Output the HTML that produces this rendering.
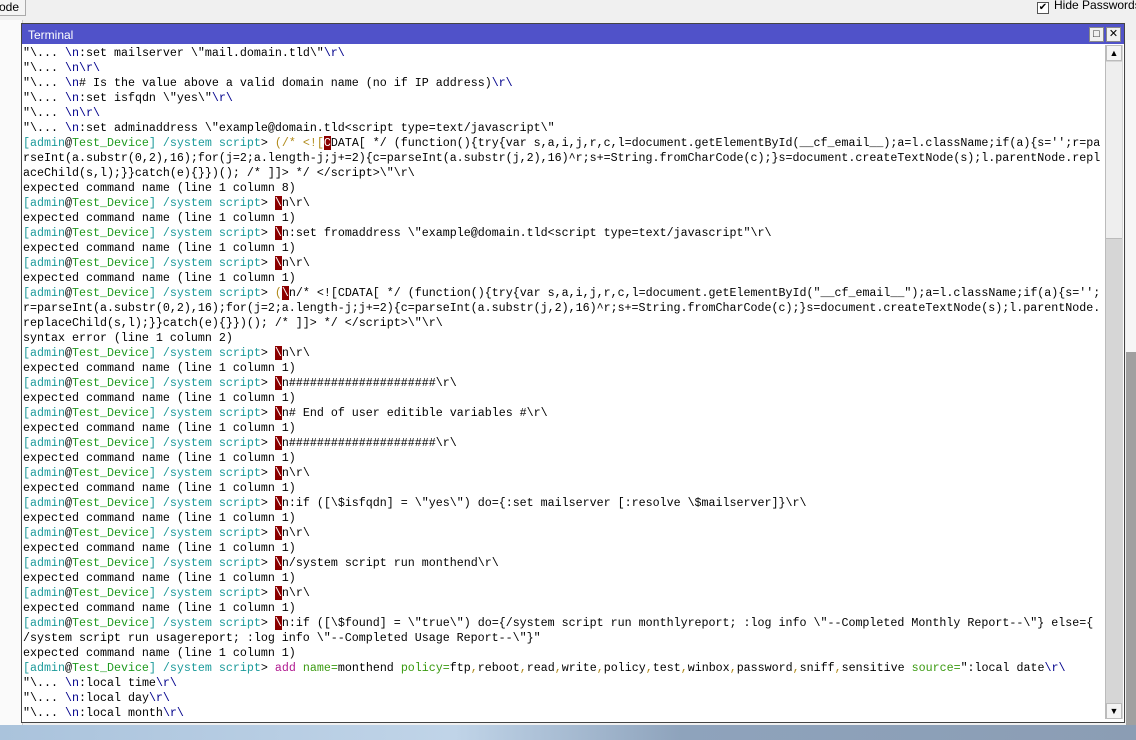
<!DOCTYPE html>
<html><head><meta charset="utf-8"><style>
body{margin:0;width:1136px;height:740px;background:#f0f0f0;position:relative;overflow:hidden;font-family:"Liberation Sans",sans-serif}
.topbtn{position:absolute;left:-2px;top:-2px;width:26px;height:16px;border:1px solid #aaa;background:#f4f4f4;font-size:12px;line-height:16px}
.hp{position:absolute;left:1037px;top:-2px;font-size:12px;color:#000;white-space:nowrap}
.hp b{display:inline-block;width:10px;height:10px;border:1px solid #555;background:#fff;vertical-align:-1px;margin-right:5px;font-size:10px;line-height:10px;text-align:center;font-weight:normal}
.leftlist{position:absolute;left:0;top:20px;width:22px;height:705px;background:#fafafa;border-right:1px solid #ccc}
.rightpane{position:absolute;left:1126px;top:40px;width:10px;height:690px;background:#f6f6f6}
.rightdark{position:absolute;left:1126px;top:352px;width:10px;height:375px;background:#a0a0a0}
.win{position:absolute;left:21px;top:23px;width:1102px;height:698px;background:#fff;border:1px solid #444}
.title{height:20px;background:#5052c9;color:#fff;font-size:12px;line-height:22px;padding-left:6px;position:relative}
.tb{position:absolute;top:3px;width:13px;height:13px;background:#f0f0f0;border:1px solid #888;color:#000;font-size:11px;line-height:13px;text-align:center}
.term{position:absolute;left:1px;top:22px;font-family:"Liberation Mono",monospace;font-size:11.67px;line-height:15px;white-space:pre;color:#000}
.sb{position:absolute;left:1083px;top:21px;width:17px;height:674px;background:#d6d6d6;border-left:1px solid #bbb}
.thumb{position:absolute;left:0;top:17px;width:16px;height:176px;background:#eee;border-bottom:1px solid #bbb}
.arr{position:absolute;left:0;width:16px;height:16px;background:#f4f4f4;border:1px solid #bbb;box-sizing:border-box;font-size:9px;line-height:14px;text-align:center}
.task{position:absolute;left:0;top:725px;width:1136px;height:15px;background:linear-gradient(90deg,#aac3dc,#c0d4e8 40%,#8ea3bc 60%,#8b9db4)}
.c{color:#1b9a9a}.g{color:#1f9a1f}.n{color:#00008b}.r{background:#8b0000;color:#fff}.m{color:#b0178f}.o{color:#b08a1a}.gg{color:#3a9a10}
</style></head><body>
<div class="topbtn">ode</div>
<div class="hp"><b>✔</b>Hide Passwords</div>
<div class="leftlist"></div>
<div class="rightpane"></div>
<div class="rightdark"></div>
<div class="win">
<div class="title">Terminal<span class="tb" style="left:1067px">□</span><span class="tb" style="left:1084px">✕</span></div>
<div class="term">"\... <span class="n">\n</span>:set mailserver \"mail.domain.tld\"<span class="n">\r\</span>
"\... <span class="n">\n\r\</span>
"\... <span class="n">\n</span># Is the value above a valid domain name (no if IP address)<span class="n">\r\</span>
"\... <span class="n">\n</span>:set isfqdn \"yes\"<span class="n">\r\</span>
"\... <span class="n">\n\r\</span>
"\... <span class="n">\n</span>:set adminaddress \"example@domain.tld&lt;script type=text/javascript\"
<span class="c">[admin</span>@<span class="g">Test_Device</span><span class="c">] /system script</span>&gt; <span class="o">(/* &lt;![</span><span class="r">C</span>DATA[ */ (function(){try{var s,a,i,j,r,c,l=document.getElementById(__cf_email__);a=l.className;if(a){s='';r=pa
rseInt(a.substr(0,2),16);for(j=2;a.length-j;j+=2){c=parseInt(a.substr(j,2),16)^r;s+=String.fromCharCode(c);}s=document.createTextNode(s);l.parentNode.repl
aceChild(s,l);}}catch(e){}})(); /* ]]&gt; */ &lt;/script&gt;\"\r\
expected command name (line 1 column 8)
<span class="c">[admin</span>@<span class="g">Test_Device</span><span class="c">] /system script</span>&gt; <span class="r">\</span>n\r\
expected command name (line 1 column 1)
<span class="c">[admin</span>@<span class="g">Test_Device</span><span class="c">] /system script</span>&gt; <span class="r">\</span>n:set fromaddress \"example@domain.tld&lt;script type=text/javascript"\r\
expected command name (line 1 column 1)
<span class="c">[admin</span>@<span class="g">Test_Device</span><span class="c">] /system script</span>&gt; <span class="r">\</span>n\r\
expected command name (line 1 column 1)
<span class="c">[admin</span>@<span class="g">Test_Device</span><span class="c">] /system script</span>&gt; <span class="o">(</span><span class="r">\</span>n/* &lt;![CDATA[ */ (function(){try{var s,a,i,j,r,c,l=document.getElementById("__cf_email__");a=l.className;if(a){s='';
r=parseInt(a.substr(0,2),16);for(j=2;a.length-j;j+=2){c=parseInt(a.substr(j,2),16)^r;s+=String.fromCharCode(c);}s=document.createTextNode(s);l.parentNode.
replaceChild(s,l);}}catch(e){}})(); /* ]]&gt; */ &lt;/script&gt;\"\r\
syntax error (line 1 column 2)
<span class="c">[admin</span>@<span class="g">Test_Device</span><span class="c">] /system script</span>&gt; <span class="r">\</span>n\r\
expected command name (line 1 column 1)
<span class="c">[admin</span>@<span class="g">Test_Device</span><span class="c">] /system script</span>&gt; <span class="r">\</span>n#####################\r\
expected command name (line 1 column 1)
<span class="c">[admin</span>@<span class="g">Test_Device</span><span class="c">] /system script</span>&gt; <span class="r">\</span>n# End of user editible variables #\r\
expected command name (line 1 column 1)
<span class="c">[admin</span>@<span class="g">Test_Device</span><span class="c">] /system script</span>&gt; <span class="r">\</span>n#####################\r\
expected command name (line 1 column 1)
<span class="c">[admin</span>@<span class="g">Test_Device</span><span class="c">] /system script</span>&gt; <span class="r">\</span>n\r\
expected command name (line 1 column 1)
<span class="c">[admin</span>@<span class="g">Test_Device</span><span class="c">] /system script</span>&gt; <span class="r">\</span>n:if ([\$isfqdn] = \"yes\") do={:set mailserver [:resolve \$mailserver]}\r\
expected command name (line 1 column 1)
<span class="c">[admin</span>@<span class="g">Test_Device</span><span class="c">] /system script</span>&gt; <span class="r">\</span>n\r\
expected command name (line 1 column 1)
<span class="c">[admin</span>@<span class="g">Test_Device</span><span class="c">] /system script</span>&gt; <span class="r">\</span>n/system script run monthend\r\
expected command name (line 1 column 1)
<span class="c">[admin</span>@<span class="g">Test_Device</span><span class="c">] /system script</span>&gt; <span class="r">\</span>n\r\
expected command name (line 1 column 1)
<span class="c">[admin</span>@<span class="g">Test_Device</span><span class="c">] /system script</span>&gt; <span class="r">\</span>n:if ([\$found] = \"true\") do={/system script run monthlyreport; :log info \"--Completed Monthly Report--\"} else={
/system script run usagereport; :log info \"--Completed Usage Report--\"}"
expected command name (line 1 column 1)
<span class="c">[admin</span>@<span class="g">Test_Device</span><span class="c">] /system script</span>&gt; <span class="m">add</span> <span class="gg">name=</span>monthend <span class="gg">policy=</span>ftp<span class="o">,</span>reboot<span class="o">,</span>read<span class="o">,</span>write<span class="o">,</span>policy<span class="o">,</span>test<span class="o">,</span>winbox<span class="o">,</span>password<span class="o">,</span>sniff<span class="o">,</span>sensitive <span class="gg">source=</span>":local date<span class="n">\r\</span>
"\... <span class="n">\n</span>:local time<span class="n">\r\</span>
"\... <span class="n">\n</span>:local day<span class="n">\r\</span>
"\... <span class="n">\n</span>:local month<span class="n">\r\</span></div>
<div class="sb"><div class="arr" style="top:0">▲</div><div class="thumb"></div><div class="arr" style="bottom:0">▼</div></div>
</div>
<div class="task"></div>
</body></html>
